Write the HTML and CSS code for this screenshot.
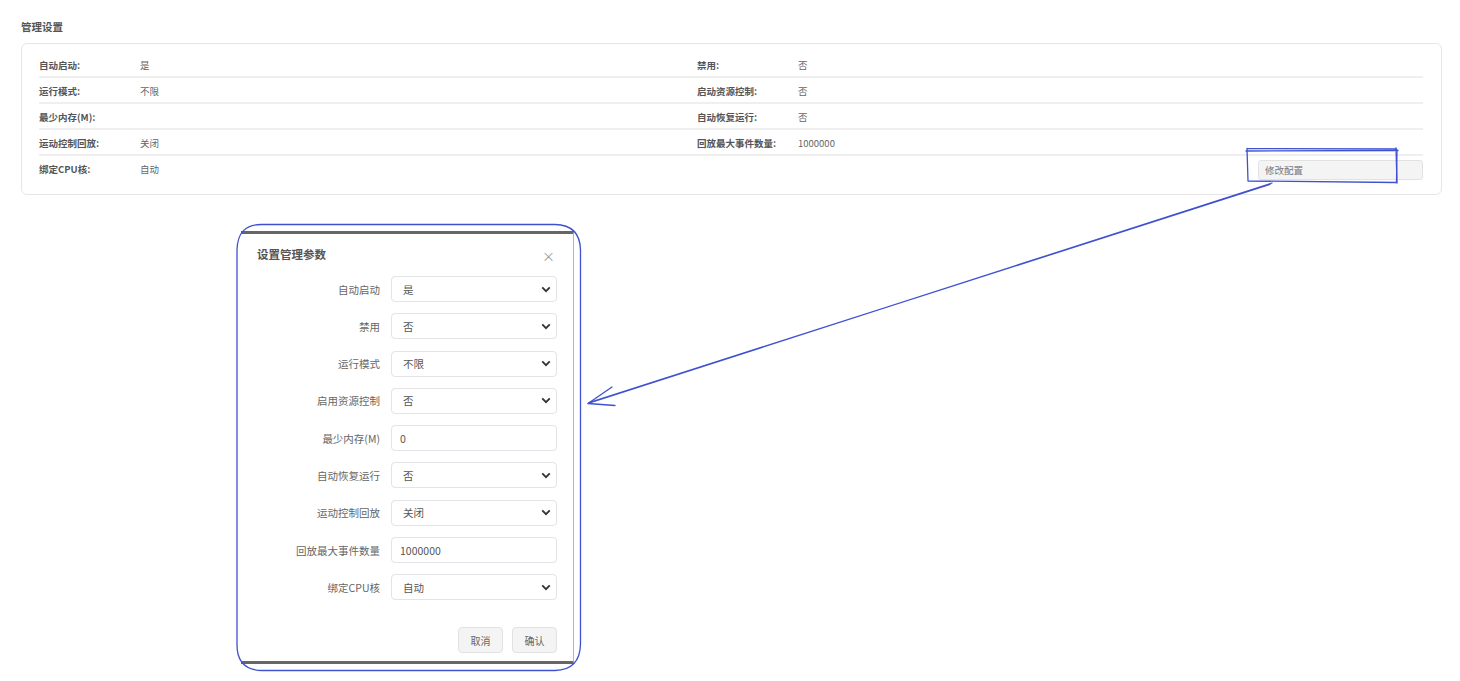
FILE: index.html
```html
<!DOCTYPE html>
<html lang="zh-CN">
<head>
    <meta charset="UTF-8">
    <meta name="viewport" content="width=device-width, initial-scale=1.0">
    <title>管理设置</title>
    <link rel="stylesheet" href="styles.css">
</head>
<body>
    <div class="page">
        <h3 class="section-title">管理设置</h3>
        <div class="card">
            <div class="row">
                <span class="label">自动启动:</span><span class="value">是</span>
                <span class="label">禁用:</span><span class="value">否</span>
            </div>
            <div class="row">
                <span class="label">运行模式:</span><span class="value">不限</span>
                <span class="label">启动资源控制:</span><span class="value">否</span>
            </div>
            <div class="row">
                <span class="label">最少内存(M):</span><span class="value"></span>
                <span class="label">自动恢复运行:</span><span class="value">否</span>
            </div>
            <div class="row">
                <span class="label">运动控制回放:</span><span class="value">关闭</span>
                <span class="label">回放最大事件数量:</span><span class="value">1000000</span>
            </div>
            <div class="row last">
                <span class="label">绑定CPU核:</span><span class="value">自动</span>
                <span></span>
                <div class="actions"><button class="btn-edit" type="button">修改配置</button></div>
            </div>
        </div>
    </div>

    <div class="dialog">
        <div class="dialog-header">
            <span class="dialog-title">设置管理参数</span>
            <span class="dialog-close">&times;</span>
        </div>
        <form class="dialog-body">
            <div class="field">
                <label>自动启动</label>
                <div class="select"><span>是</span><svg viewBox="0 0 12 8"><path d="M1.5 1.5 6 6l4.5-4.5"/></svg></div>
            </div>
            <div class="field">
                <label>禁用</label>
                <div class="select"><span>否</span><svg viewBox="0 0 12 8"><path d="M1.5 1.5 6 6l4.5-4.5"/></svg></div>
            </div>
            <div class="field">
                <label>运行模式</label>
                <div class="select"><span>不限</span><svg viewBox="0 0 12 8"><path d="M1.5 1.5 6 6l4.5-4.5"/></svg></div>
            </div>
            <div class="field">
                <label>启用资源控制</label>
                <div class="select"><span>否</span><svg viewBox="0 0 12 8"><path d="M1.5 1.5 6 6l4.5-4.5"/></svg></div>
            </div>
            <div class="field">
                <label>最少内存(M)</label>
                <input class="input" type="text" value="0">
            </div>
            <div class="field">
                <label>自动恢复运行</label>
                <div class="select"><span>否</span><svg viewBox="0 0 12 8"><path d="M1.5 1.5 6 6l4.5-4.5"/></svg></div>
            </div>
            <div class="field">
                <label>运动控制回放</label>
                <div class="select"><span>关闭</span><svg viewBox="0 0 12 8"><path d="M1.5 1.5 6 6l4.5-4.5"/></svg></div>
            </div>
            <div class="field">
                <label>回放最大事件数量</label>
                <input class="input" type="text" value="1000000">
            </div>
            <div class="field">
                <label>绑定CPU核</label>
                <div class="select"><span>自动</span><svg viewBox="0 0 12 8"><path d="M1.5 1.5 6 6l4.5-4.5"/></svg></div>
            </div>
        </form>
        <div class="dialog-footer">
            <button class="btn" type="button">取消</button>
            <button class="btn" type="button">确认</button>
        </div>
    </div>

    <!-- hand drawn annotation -->
    <svg class="annotation" viewBox="0 0 1460 681" width="1460" height="681">
        <path d="M262 224.5 H555 Q580 225 580.5 250 V644 Q580 670 555 670.5 H262 Q237 670 237 645 V250 Q237.5 224 262 224.5 Z"/>
        <path d="M1247 148.5 L1396 149 L1397 150 L1396.5 182.5 L1248 181 L1247 148.5"/>
        <path d="M1246 151 L1398 150.5 M1396 148 L1397 183"/>
        <path d="M1272 183 L588 403.5 M1270 184.5 L589 402.5"/>
        <path d="M612 387 L588 403.5 L615 405.5"/>
    </svg>
</body>
</html>
```

FILE: styles.css
```css
body {
    margin: 0;
    padding: 0;
    background-color: #ffffff;
    font-family: "Noto Sans CJK SC", "Liberation Sans", sans-serif;
    color: #555;
}
.page {
    padding: 18px 18px 0 21px;
}
.section-title {
    margin: 0 0 8px 0;
    font-size: 10.5px;
    line-height: 17px;
    font-weight: bold;
    color: #555;
}
.card {
    border: 1px solid #e6e6e6;
    border-radius: 6px;
    padding: 8px 18px 12px 17px;
}
.row {
    display: grid;
    grid-template-columns: 101px 557px 101px 1fr;
    align-items: center;
    height: 26px;
    padding-top: 2px;
    border-bottom: 2px solid #efefef;
    box-sizing: border-box;
    font-size: 9.5px;
}
.row.last {
    border-bottom: none;
    padding-top: 0;
    grid-template-columns: 101px 557px 1fr 165px;
}
.label {
    font-weight: bold;
    color: #555;
}
.value {
    color: #666;
}
.actions {
    display: flex;
    justify-content: flex-end;
    padding-top: 2px;
}
.btn-edit {
    width: 165px;
    height: 20px;
    background-color: #f4f4f4;
    border: 1px solid #e2e2e2;
    border-radius: 3px;
    text-align: left;
    padding: 0 6px;
    font-family: inherit;
    font-size: 9.5px;
    color: #777;
}

.dialog {
    position: absolute;
    left: 241px;
    top: 231px;
    width: 332px;
    height: 427px;
    background: #fff;
    border-top: 3px solid #666;
    border-bottom: 3px solid #666;
    border-right: 1px solid #b5b5b5;
    display: flex;
    flex-direction: column;
}
.dialog-header {
    display: flex;
    justify-content: space-between;
    align-items: center;
    padding: 9px 18px 0 16px;
    height: 21px;
}
.dialog-title {
    font-size: 11.5px;
    font-weight: bold;
    color: #555;
}
.dialog-close {
    font-size: 13px;
    color: #999;
    padding-top: 3px;
}
.dialog-body {
    margin: 0;
    padding: 12px 16px 0 0;
    display: flex;
    flex-direction: column;
    gap: 11.3px;
}
.field {
    display: flex;
    align-items: center;
    gap: 11px;
}
.field label {
    width: 139px;
    text-align: right;
    font-size: 10.5px;
    color: #666;
}
.select, .input {
    width: 166px;
    height: 26px;
    box-sizing: border-box;
    border: 1px solid #e3e3e8;
    border-radius: 4px;
    padding: 0 4px 0 11px;
    font-family: inherit;
    font-size: 10.5px;
    color: #555;
    background: #fff;
}
.select {
    display: flex;
    align-items: center;
    justify-content: space-between;
}
.select svg {
    width: 10px;
    height: 7px;
    margin-right: 1px;
    fill: none;
    stroke: #333;
    stroke-width: 2.2;
}
.input {
    outline: none;
    padding-left: 8px;
}
.dialog-footer {
    margin-top: auto;
    display: flex;
    justify-content: flex-end;
    gap: 9px;
    padding: 0 16px 8px 0;
}
.btn {
    width: 45px;
    height: 26px;
    padding: 0;
    background-color: #f4f4f4;
    border: 1px solid #e2e2e2;
    border-radius: 4px;
    font-family: inherit;
    font-size: 10px;
    color: #666;
}

.annotation {
    position: absolute;
    left: 0;
    top: 0;
    pointer-events: none;
    fill: none;
    stroke: #3f51d0;
    stroke-width: 1.3;
    stroke-linecap: round;
    stroke-linejoin: round;
}
```
